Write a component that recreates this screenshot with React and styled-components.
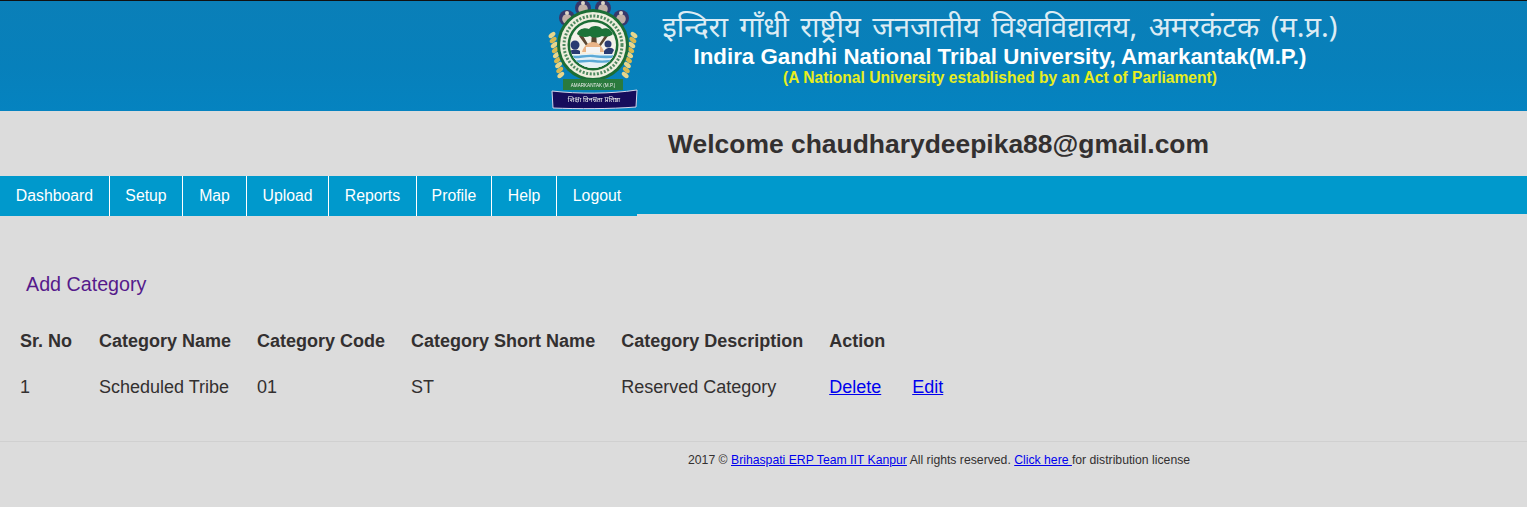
import React from 'react';
import styled, { createGlobalStyle } from 'styled-components';

const GlobalStyle = createGlobalStyle`
  html, body {
    margin: 0;
    padding: 0;
    background: #dcdcdc;
    font-family: "Liberation Sans", Arial, sans-serif;
    color: #333030;
  }
`;

const Page = styled.div`
  width: 1527px;
  height: 507px;
  overflow: hidden;
  background: #dcdcdc;
`;

const Banner = styled.header`
  box-sizing: border-box;
  height: 111px;
  border-top: 1px solid #111;
  background: linear-gradient(#0a7fb8, #0780bb 60%, #0583c0);
  display: flex;
  padding-left: 546px;
`;

const Titles = styled.div`
  width: 700px;
  margin-left: 8px;
  display: flex;
  flex-direction: column;
  align-items: center;
`;

const HindiTitle = styled.div`
  font-family: "Noto Sans", "DejaVu Sans", sans-serif;
  font-size: 29px;
  word-spacing: 4px;
  line-height: 40px;
  margin-top: 5px;
  color: #dcecf4;
  white-space: nowrap;
`;

const EnglishTitle = styled.div`
  font-size: 22.3px;
  font-weight: bold;
  line-height: 22px;
  color: #fff;
  white-space: nowrap;
`;

const Tagline = styled.div`
  font-size: 15.6px;
  font-weight: bold;
  line-height: 18px;
  margin-top: 1px;
  color: #e8ee20;
  white-space: nowrap;
`;

const Welcome = styled.h1`
  margin: 0;
  height: 65px;
  box-sizing: border-box;
  padding: 18px 0 0 668px;
  font-size: 26.45px;
  line-height: 30px;
  font-weight: bold;
  color: #333030;
`;

const NavBar = styled.nav`
  height: 38px;
  background: #0099cc;
  display: flex;
`;

const NavItem = styled.a`
  box-sizing: border-box;
  width: ${(p) => p.$width}px;
  height: 40px;
  line-height: 40px;
  text-align: center;
  background: #0099cc;
  color: #fff;
  font-size: 15.8px;
  border-right: ${(p) => (p.$last ? 'none' : '1px solid #fff')};
`;

const Content = styled.main`
  padding: 58px 7px 0;
`;

const AddLink = styled.a`
  display: block;
  margin-left: 19px;
  font-size: 19.7px;
  line-height: 24px;
  color: #551a8b;
`;

const Table = styled.table`
  margin-top: 22px;
  border-collapse: collapse;
  font-size: 18px;
`;

const Head = styled.th`
  padding: 12px 13px;
  line-height: 22px;
  text-align: left;
  font-weight: bold;
  white-space: nowrap;

  &:first-child {
    padding-right: 14px;
  }
`;

const Cell = styled.td`
  padding: 12px 13px;
  line-height: 22px;
  white-space: nowrap;
`;

const ActionLink = styled.a`
  color: #0000ee;
  text-decoration: underline;
  margin-right: 31px;
`;

const Footer = styled.footer`
  margin-top: 31px;
  border-top: 1px solid #d0d0d0;
  padding: 11px 0 0 688px;
  font-size: 12.22px;
  line-height: 14px;
`;

const FooterLink = styled.a`
  color: #0000ee;
  text-decoration: underline;
`;

function Logo() {
  const grains = [0, 1, 2, 3, 4, 5, 6, 7, 8];
  return (
    <svg width="96" height="110" viewBox="0 0 96 110">
      <defs>
        <filter id="soft"><feGaussianBlur stdDeviation="0.6" /></filter>
        <clipPath id="inner"><circle cx="47" cy="44" r="23" /></clipPath>
      </defs>
      <g filter="url(#soft)">
        {/* crowns on top */}
        {[[21, 17], [37, 7], [57, 7], [75, 17]].map(([x, y]) => (
          <g key={x}>
            <circle cx={x} cy={y} r="8" fill="#39386a" />
            <circle cx={x} cy={y + 1} r="4.8" fill="#c2b0a8" />
            <circle cx={x} cy={y - 5} r="2" fill="#ddd6c8" />
          </g>
        ))}
        {/* wheat either side */}
        {grains.map((i) => (
          <g key={i} fill={i % 2 ? '#d8b850' : '#e8d68c'}>
            <ellipse cx={6 + i * 1.1} cy={34 + i * 5} rx="4" ry="2.2" transform={`rotate(-40 ${6 + i * 1.1} ${34 + i * 5})`} />
            <ellipse cx={88 - i * 1.1} cy={34 + i * 5} rx="4" ry="2.2" transform={`rotate(40 ${88 - i * 1.1} ${34 + i * 5})`} />
          </g>
        ))}
        {/* rings */}
        <circle cx="47" cy="44" r="36" fill="#1d6e36" />
        <circle cx="47" cy="44" r="33" fill="#eeeedd" />
        <circle cx="47" cy="44" r="29" fill="none" stroke="#4f8a60" strokeWidth="3" strokeDasharray="2 1.6" />
        <circle cx="47" cy="44" r="25.5" fill="#1d6e36" />
        <circle cx="47" cy="44" r="23" fill="#f3f2ea" />
        {/* scene inside */}
        <g clipPath="url(#inner)">
          <path d="M20 58c8-14 46-14 54 0v14H20z" fill="#f7f0de" />
          <path d="M36 33l7 12-2 1-8-11zM60 33l-8 12 2 1 8-11zM46 30h4l1 16h-6z" fill="#5a4630" />
          <path d="M31 33c1-5 8-7 12-5 2-4 11-4 13 0 4-2 10 0 11 5-3 3-8 3-11 2-4 2-9 2-12 0-4 2-10 1-13-2z" fill="#1c7339" />
          <path d="M36 51c2-7 7-10 11-10s9 3 11 10z" fill="#e9b487" />
          <path d="M40 52v-6h14v6z" fill="#f4f4f4" />
          <circle cx="29" cy="44" r="4.5" fill="#2c3a72" />
          <path d="M24 50c3-2 7-2 10 0v3H24z" fill="#2c3a72" />
          <circle cx="62" cy="43" r="3.5" fill="#2c3a72" />
          <path d="M58 50c3-4 8-4 10-1l-2 4h-8z" fill="#2c3a72" />
          <path d="M20 53h54v18H20z" fill="#e6f1f6" />
          <path d="M22 55c8 3 16-1 25 0s17 2 25-1M24 60c7 2 15-1 23 0s15 1 23-1" fill="none" stroke="#5aa9d6" strokeWidth="2.4" />
        </g>
        {/* ribbons */}
        <rect x="17" y="78" width="60" height="11" fill="#2c7a3e" />
        <text x="47" y="86" textAnchor="middle" fontSize="4.6" fill="#eee" fontFamily="Liberation Sans">AMARKANTAK (M.P.)</text>
        <path d="M6 90c26 3 58 3 85-1l-1 17c-26 2-58 2-83 1z" fill="#14105c" stroke="#d8d4ea" strokeWidth="1" />
        <text x="48" y="101" textAnchor="middle" fontSize="7" fill="#eee" fontFamily="Noto Sans, DejaVu Sans, sans-serif">शिक्षा विनम्रता प्रतिष्ठा</text>
      </g>
    </svg>
  );
}

const navItems = [
  { label: 'Dashboard', width: 110 },
  { label: 'Setup', width: 73 },
  { label: 'Map', width: 64 },
  { label: 'Upload', width: 82 },
  { label: 'Reports', width: 88 },
  { label: 'Profile', width: 75 },
  { label: 'Help', width: 65 },
  { label: 'Logout', width: 80 },
];
const columns = ['Sr. No', 'Category Name', 'Category Code', 'Category Short Name', 'Category Description', 'Action'];

function App() {
  return (
    <Page>
      <GlobalStyle />
      <Banner>
        <Logo />
        <Titles>
          <HindiTitle>इन्दिरा गाँधी राष्ट्रीय जनजातीय विश्वविद्यालय, अमरकंटक (म.प्र.)</HindiTitle>
          <EnglishTitle>Indira Gandhi National Tribal University, Amarkantak(M.P.)</EnglishTitle>
          <Tagline>(A National University established by an Act of Parliament)</Tagline>
        </Titles>
      </Banner>
      <Welcome>Welcome chaudharydeepika88@gmail.com</Welcome>
      <NavBar>
        {navItems.map((item, i) => (
          <NavItem key={item.label} $width={item.width} $last={i === navItems.length - 1}>{item.label}</NavItem>
        ))}
      </NavBar>
      <Content>
        <AddLink>Add Category</AddLink>
        <Table>
          <thead>
            <tr>
              {columns.map((c) => <Head key={c}>{c}</Head>)}
            </tr>
          </thead>
          <tbody>
            <tr>
              <Cell>1</Cell>
              <Cell>Scheduled Tribe</Cell>
              <Cell>01</Cell>
              <Cell>ST</Cell>
              <Cell>Reserved Category</Cell>
              <Cell>
                <ActionLink>Delete</ActionLink>
                <ActionLink>Edit</ActionLink>
              </Cell>
            </tr>
          </tbody>
        </Table>
      </Content>
      <Footer>
        2017 © <FooterLink>Brihaspati ERP Team IIT Kanpur</FooterLink> All rights reserved. <FooterLink>Click here </FooterLink>for distribution license
      </Footer>
    </Page>
  );
}

export default App;
